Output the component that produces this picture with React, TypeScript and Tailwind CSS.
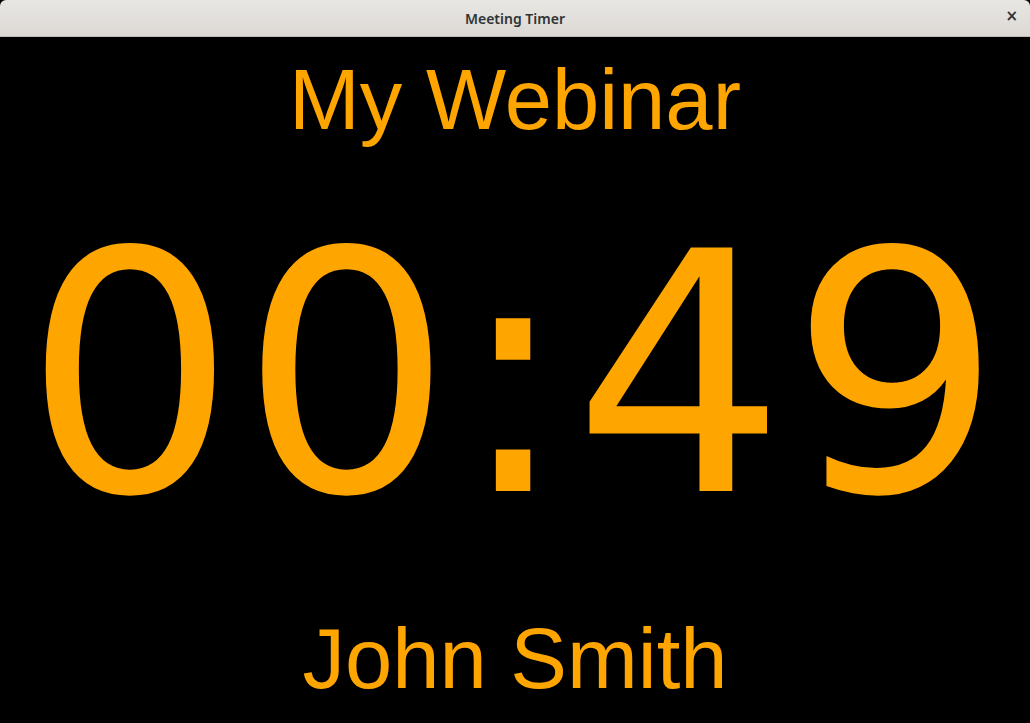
export default function App() {
  return (
    <div className="flex h-[723px] w-[1030px] flex-col overflow-hidden bg-black">
      {/* ── window title bar */}
      <div className="relative flex h-[37px] shrink-0 items-center justify-center rounded-t-[6px] border-b border-[#c0bbb4] bg-gradient-to-b from-[#e8e6e3] to-[#dcd9d5]">
        <span className="font-['Noto_Sans',sans-serif] text-[14px] font-semibold text-[#2e3436]">
          Meeting Timer
        </span>
        <span className="absolute right-[12px] top-[9px] font-['DejaVu_Sans',sans-serif] text-[15px] font-bold leading-none text-[#2e3436]">
          ×
        </span>
      </div>

      {/* ── timer display */}
      <div className="flex flex-1 flex-col items-center text-[#ffa500]">
        <p className="mt-[20px] font-['Liberation_Sans',sans-serif] text-[85px] leading-none">My Webinar</p>
        <p className="mt-[67px] font-['DejaVu_Sans',sans-serif] text-[334px] leading-none tracking-[4px]">00:49</p>
        <p className="mt-auto mb-[22px] font-['Liberation_Sans',sans-serif] text-[85px] leading-none">John Smith</p>
      </div>
    </div>
  );
}
